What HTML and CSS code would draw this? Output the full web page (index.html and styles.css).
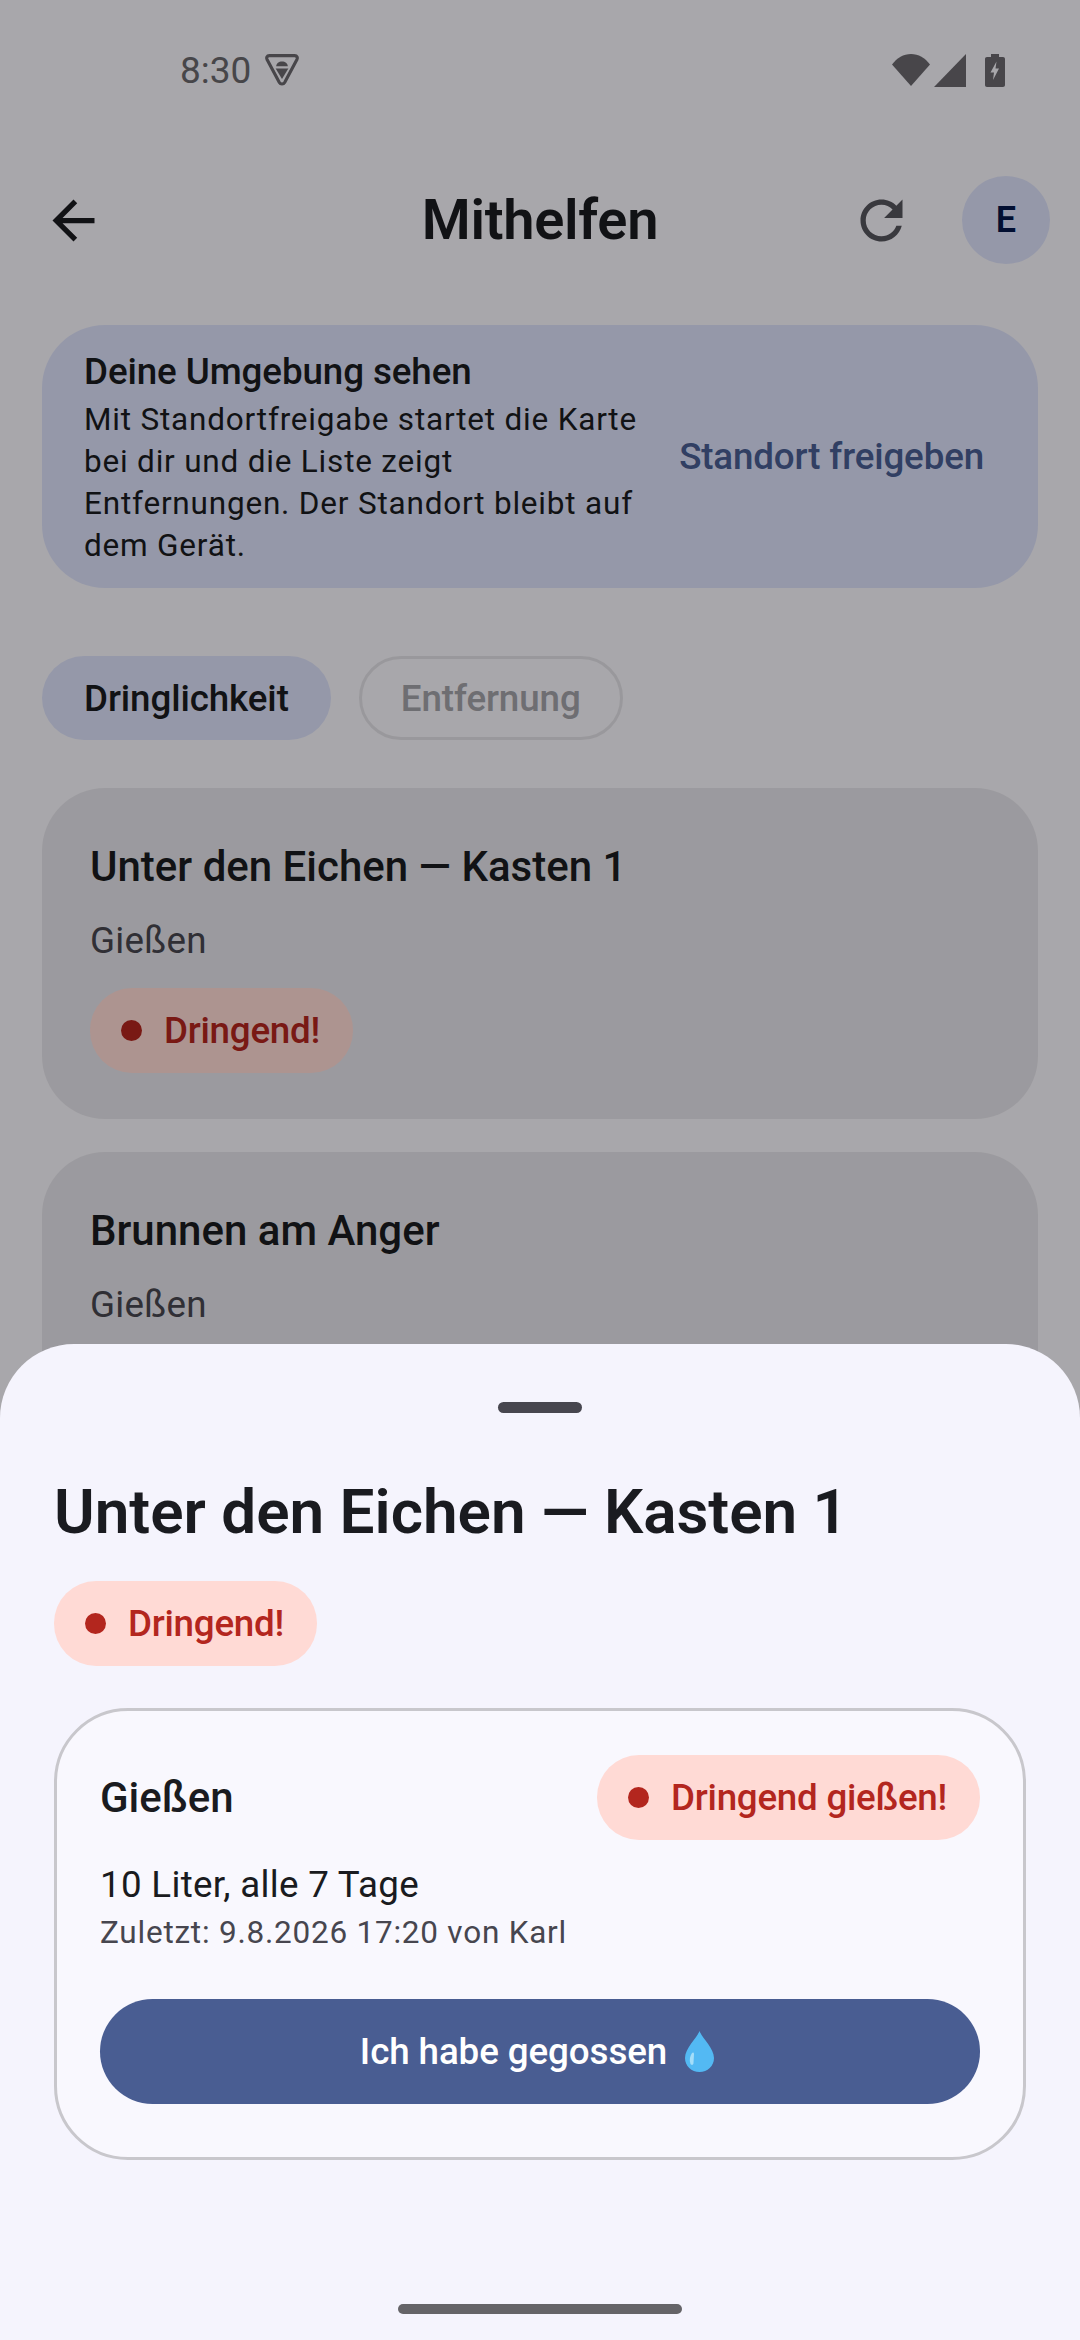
FILE: index.html
```html
<!DOCTYPE html>
<html lang="de">
<head>
  <meta charset="UTF-8" />
  <meta name="viewport" content="width=device-width, initial-scale=1.0" />
  <title>Mithelfen</title>
  <link rel="stylesheet" href="styles.css">
</head>
<body>

<div class="screen">
  <div class="statusbar">
    <div class="status-left">
      <span class="time">8:30</span>
      <svg class="vpn" viewBox="0 0 34 32">
        <path d="M5 2.500h24c2.200 0 3.200 1.900 2.100 3.700L19.500 27.800c-1.100 1.900-3.900 1.900-5 0L2.900 6.200C1.800 4.400 2.800 2.500 5 2.500z" fill="none" stroke="#6a686e" stroke-width="3"/>
        <path d="M11.500 12.500c.2-2.800 2.500-4.500 5.500-4.500s5.300 1.700 5.500 4.500z" fill="#6a686e"/>
        <path d="M11 14.500h12L17 24.500z" fill="#6a686e"/>
      </svg>
    </div>
    <div class="status-right">
      <svg class="wifi" viewBox="0 0 38 32"><path d="M0 10.500C5 4 11.500 0 19 0s14 4 19 10.500L19 32z" fill="#6a686e"/></svg>
      <svg class="signal" viewBox="0 0 32 33"><path d="M32 0v33H0z" fill="#6a686e"/></svg>
      <svg class="battery" viewBox="0 0 20 33">
        <path d="M6 0h8v3h4c1.200 0 2 .8 2 2v26c0 1.200-.8 2-2 2H2c-1.200 0-2-.8-2-2V5c0-1.200.8-2 2-2h4z" fill="#6a686e"/>
        <path d="M11.500 7.500 5.500 18.500h3.500l-1 7.500 6-11.500h-3.500z" fill="#f8f6fc"/>
      </svg>
    </div>
  </div>

  <header class="topbar">
    <svg class="icon-btn back" viewBox="0 0 24 24"><path d="M20 11H7.830l5.590-5.590L12 4l-8 8 8 8 1.410-1.410L7.830 13H20v-2z"/></svg>
    <h1 class="page-title">Mithelfen</h1>
    <svg class="icon-btn refresh" viewBox="0 0 24 24"><path d="M17.650 6.350C16.200 4.900 14.210 4 12 4c-4.420 0-7.990 3.580-7.990 8s3.570 8 7.990 8c3.730 0 6.840-2.550 7.730-6h-2.080c-.82 2.330-3.040 4-5.650 4-3.310 0-6-2.690-6-6s2.690-6 6-6c1.660 0 3.140.69 4.220 1.780L13 11h7V4l-2.350 2.350z"/></svg>
    <div class="avatar">E</div>
  </header>

  <section class="banner">
    <div class="banner-text">
      <div class="banner-title">Deine Umgebung sehen</div>
      <div class="banner-body">Mit Standortfreigabe startet die Karte bei dir und die Liste zeigt Entfernungen. Der Standort bleibt auf dem Gerät.</div>
    </div>
    <div class="banner-action">Standort freigeben</div>
  </section>

  <div class="sort-chips">
    <div class="sort-chip selected">Dringlichkeit</div>
    <div class="sort-chip outlined">Entfernung</div>
  </div>

  <section class="card">
    <div class="card-title">Unter den Eichen — Kasten 1</div>
    <div class="card-sub">Gießen</div>
    <div class="badge"><span class="dot"></span>Dringend!</div>
  </section>

  <section class="card">
    <div class="card-title">Brunnen am Anger</div>
    <div class="card-sub">Gießen</div>
    <div class="badge"><span class="dot"></span>Dringend!</div>
  </section>

  <div class="scrim"></div>

  <aside class="sheet">
    <div class="handle"></div>
    <h2 class="sheet-title">Unter den Eichen — Kasten 1</h2>
    <div class="badge"><span class="dot"></span>Dringend!</div>

    <div class="task">
      <div class="task-head">
        <div class="task-name">Gießen</div>
        <div class="badge"><span class="dot"></span>Dringend gießen!</div>
      </div>
      <div class="task-amount">10 Liter, alle 7 Tage</div>
      <div class="task-last">Zuletzt: 9.8.2026 17:20 von Karl</div>
      <button class="task-btn">Ich habe gegossen
        <svg class="drop" viewBox="0 0 29 41">
          <path d="M14.500 0C12 7 0 17 0 27c0 8 6.500 14 14.500 14S29 35 29 27C29 17 17 7 14.500 0z" fill="#53b9f3"/>
          <path d="M7 22c-2 3-3 7-1.500 11 1 1.500 3 1 3-1 0-3 .5-6 .5-9 0-1.500-1-2-2-1z" fill="#a5def9"/>
        </svg>
      </button>
    </div>
  </aside>

  <div class="home-bar"></div>
</div>

</body>
</html>
```

FILE: styles.css
```css
* {
  box-sizing: border-box;
}
body {
  margin: 0;
  font-family: 'Roboto', sans-serif;
  background: #f8f6fc;
  color: #1a1b20;
}
.screen {
  position: relative;
  width: 1080px;
  height: 2340px;
  overflow: hidden;
  background: #f8f6fc;
}

/* status bar */
.statusbar {
  height: 140px;
  display: flex;
  justify-content: space-between;
  align-items: center;
  padding: 0 75px 0 180px;
}
.status-left {
  display: flex;
  align-items: center;
  gap: 13px;
}
.time {
  font-size: 37px;
  color: #69686c;
}
.vpn {
  width: 36px;
  height: 34px;
}
.status-right {
  display: flex;
  align-items: center;
}
.wifi {
  width: 38px;
  height: 32px;
}
.signal {
  width: 32px;
  height: 33px;
  margin-left: 4px;
}
.battery {
  width: 20px;
  height: 33px;
  margin-left: 19px;
}

/* top bar */
.topbar {
  position: relative;
  height: 160px;
  display: flex;
  align-items: center;
  padding: 0 30px 0 42px;
}
.icon-btn {
  width: 63px;
  height: 63px;
  flex: none;
}
.back {
  fill: #1a1b20;
}
.refresh {
  fill: #55545c;
  margin-left: auto;
}
.page-title {
  position: absolute;
  left: 0;
  right: 0;
  margin: 0;
  text-align: center;
  font-size: 56px;
  font-weight: 600;
  letter-spacing: -.3px;
}
.avatar {
  width: 88px;
  height: 88px;
  margin-left: 49px;
  border-radius: 50%;
  background: #dce1fa;
  color: #03174b;
  display: flex;
  align-items: center;
  justify-content: center;
  font-size: 36px;
  font-weight: 600;
}

/* location banner */
.banner {
  margin: 25px 42px 0;
  padding: 21px 42px;
  height: 263px;
  border-radius: 63px;
  background: #dce1fa;
  display: flex;
  align-items: center;
}
.banner-text {
  flex: 1;
}
.banner-title {
  font-size: 36.75px;
  line-height: 52.5px;
  font-weight: 500;
  letter-spacing: -.1px;
}
.banner-body {
  font-size: 31.5px;
  line-height: 42px;
  letter-spacing: .8px;
  color: #1a1b20;
}
.banner-action {
  margin-left: 28px;
  padding-right: 12px;
  font-size: 36.75px;
  font-weight: 500;
  letter-spacing: -.15px;
  color: #495d92;
}

/* sort chips */
.sort-chips {
  display: flex;
  gap: 28px;
  margin: 68px 42px 48px;
}
.sort-chip {
  height: 84px;
  padding: 0 42px;
  border-radius: 42px;
  display: flex;
  align-items: center;
  font-size: 36.75px;
  font-weight: 500;
  letter-spacing: -.1px;
}
.selected {
  background: #dce1fa;
}
.outlined {
  padding: 0 39px;
  border: 3px solid #e2e1e6;
  color: #a3a2a8;
}

/* list cards */
.card {
  margin: 0 42px 33px;
  padding: 47px 48px 46px;
  border-radius: 63px;
  background: #e5e4ea;
}
.card-title {
  font-size: 42px;
  line-height: 63px;
  font-weight: 500;
}
.card-sub {
  margin: 17px 0 20px;
  font-size: 36.75px;
  line-height: 52.5px;
  letter-spacing: .3px;
  color: #47464f;
}
.badge {
  display: inline-flex;
  align-items: center;
  height: 85px;
  padding: 0 33px 0 31px;
  border-radius: 42px;
  background: #ffdad5;
  color: #b3261e;
  font-size: 36.75px;
  font-weight: 500;
  letter-spacing: -.25px;
}
.dot {
  width: 21px;
  height: 21px;
  margin-right: 22px;
  border-radius: 50%;
  background: #b3261e;
}

.scrim {
  position: absolute;
  inset: 0;
  background: rgba(0, 0, 0, .32);
}

/* bottom sheet */
.sheet {
  position: absolute;
  left: 0;
  right: 0;
  top: 1344px;
  bottom: 0;
  padding: 58px 54px 0;
  border-radius: 74px 74px 0 0;
  background: #f5f4fd;
}
.handle {
  width: 84px;
  height: 11px;
  margin: 0 auto;
  border-radius: 6px;
  background: #47464f;
}
.sheet-title {
  margin: 57px 0 27px;
  font-size: 62px;
  line-height: 84px;
  font-weight: 600;
}
.task {
  margin-top: 42px;
  padding: 44px 43px 53px;
  border: 3px solid #c8c7cc;
  border-radius: 74px;
  background: #f9f8fe;
}
.task-head {
  display: flex;
  justify-content: space-between;
  align-items: center;
}
.task-name {
  font-size: 42px;
  font-weight: 500;
}
.task-amount {
  margin-top: 19px;
  font-size: 36.75px;
  line-height: 52.5px;
  letter-spacing: .3px;
}
.task-last {
  font-size: 31.5px;
  line-height: 42px;
  letter-spacing: .77px;
  color: #47464f;
}
.task-btn {
  width: 100%;
  height: 105px;
  margin-top: 45px;
  padding: 0 6px 0 0;
  border: none;
  border-radius: 53px;
  background: #495d92;
  color: #fff;
  display: flex;
  align-items: center;
  justify-content: center;
  font-family: inherit;
  font-size: 36.75px;
  font-weight: 500;
  letter-spacing: -.1px;
}
.drop {
  width: 29px;
  height: 41px;
  margin-left: 18px;
}

.home-bar {
  position: absolute;
  left: 398px;
  bottom: 26px;
  width: 284px;
  height: 10px;
  border-radius: 5px;
  background: #656468;
}
```
